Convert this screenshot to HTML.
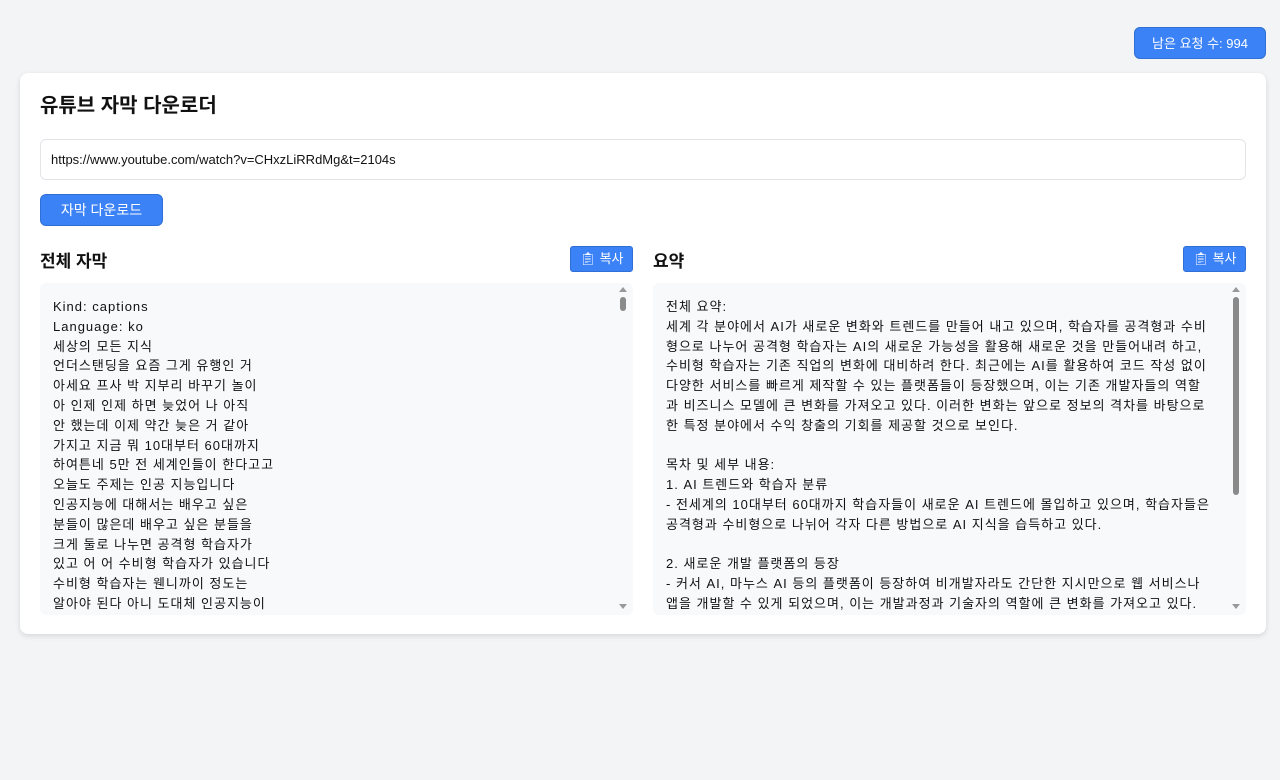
<!DOCTYPE html>
<html><head><meta charset="utf-8"><style>
body{margin:0;background:#f3f4f6;font-family:"Liberation Sans","Noto Sans CJK KR",sans-serif;color:#111;width:1280px;height:780px;overflow:hidden;position:relative}
.req{position:absolute;left:1134px;top:27px;width:132px;height:32px;background:#3b82f6;border-radius:6px;color:#fff;font-size:13px;line-height:32px;text-align:center;box-sizing:border-box;border:1px solid #2f6fd6}
.card{position:absolute;left:20px;top:73px;width:1246px;height:561px;background:#fff;border-radius:8px;box-shadow:0 2px 6px rgba(0,0,0,.12)}
h1{position:absolute;left:20px;top:23px;margin:0;font-size:20px;font-weight:bold;line-height:1}
.inp{position:absolute;left:20px;top:66px;width:1206px;height:41px;box-sizing:border-box;border:1px solid #e2e4e8;border-radius:6px;font-size:13px;line-height:39px;padding-left:10px}
.btn{position:absolute;left:20px;top:121px;width:123px;height:32px;background:#3b82f6;border:1px solid #2f6fd6;box-sizing:border-box;border-radius:6px;color:#fff;font-size:14px;line-height:30px;text-align:center}
h2{position:absolute;margin:0;font-size:17px;font-weight:bold;top:174px}
.copy{position:absolute;top:173px;width:63px;height:26px;background:#3b82f6;border:1px solid #2f6fd6;box-sizing:border-box;border-radius:3px;color:#fff;font-size:13px;line-height:24px;text-align:center}
.box{position:absolute;top:210px;width:593px;height:332px;background:#f8f9fb;border-radius:6px;overflow:hidden;box-sizing:border-box;padding:14px 20px 0 13px;font-size:13px;line-height:19.8px;white-space:nowrap;letter-spacing:1px}
.sb{position:absolute;right:4px;top:0;width:12px;height:332px}
.up,.dn{position:absolute;left:2px;width:0;height:0;border-left:4px solid transparent;border-right:4px solid transparent}
.up{top:4px;border-bottom:5px solid #999}.dn{bottom:6px;border-top:5px solid #999}
.th{position:absolute;left:3px;width:6px;border-radius:3px;background:#8a8a8a}
</style></head><body>
<div class="req">남은 요청 수: 994</div>
<div class="card">
<h1>유튜브 자막 다운로더</h1>
<div class="inp">https://www.youtube.com/watch?v=CHxzLiRRdMg&amp;t=2104s</div>
<div class="btn">자막 다운로드</div>
<h2 style="left:20px">전체 자막</h2>
<div class="copy" style="left:550px">📋︎ 복사</div>
<h2 style="left:633px">요약</h2>
<div class="copy" style="left:1163px">📋︎ 복사</div>
<div class="box" style="left:20px">Kind: captions<br>Language: ko<br>세상의 모든 지식<br>언더스탠딩을 요즘 그게 유행인 거<br>아세요 프사 박 지부리 바꾸기 놀이<br>아 인제 인제 하면 늦었어 나 아직<br>안 했는데 이제 약간 늦은 거 같아<br>가지고 지금 뭐 10대부터 60대까지<br>하여튼네 5만 전 세계인들이 한다고고<br>오늘도 주제는 인공 지능입니다<br>인공지능에 대해서는 배우고 싶은<br>분들이 많은데 배우고 싶은 분들을<br>크게 둘로 나누면 공격형 학습자가<br>있고 어 어 수비형 학습자가 있습니다<br>수비형 학습자는 웬니까이 정도는<br>알아야 된다 아니 도대체 인공지능이
<div class="sb"><div class="up"></div><div class="th" style="top:14px;height:14px"></div><div class="dn"></div></div></div>
<div class="box" style="left:633px">전체 요약:<br>세계 각 분야에서 AI가 새로운 변화와 트렌드를 만들어 내고 있으며, 학습자를 공격형과 수비<br>형으로 나누어 공격형 학습자는 AI의 새로운 가능성을 활용해 새로운 것을 만들어내려 하고,<br>수비형 학습자는 기존 직업의 변화에 대비하려 한다. 최근에는 AI를 활용하여 코드 작성 없이<br>다양한 서비스를 빠르게 제작할 수 있는 플랫폼들이 등장했으며, 이는 기존 개발자들의 역할<br>과 비즈니스 모델에 큰 변화를 가져오고 있다. 이러한 변화는 앞으로 정보의 격차를 바탕으로<br>한 특정 분야에서 수익 창출의 기회를 제공할 것으로 보인다.<br><br>목차 및 세부 내용:<br>1. AI 트렌드와 학습자 분류<br>- 전세계의 10대부터 60대까지 학습자들이 새로운 AI 트렌드에 몰입하고 있으며, 학습자들은<br>공격형과 수비형으로 나뉘어 각자 다른 방법으로 AI 지식을 습득하고 있다.<br><br>2. 새로운 개발 플랫폼의 등장<br>- 커서 AI, 마누스 AI 등의 플랫폼이 등장하여 비개발자라도 간단한 지시만으로 웹 서비스나<br>앱을 개발할 수 있게 되었으며, 이는 개발과정과 기술자의 역할에 큰 변화를 가져오고 있다.
<div class="sb"><div class="up"></div><div class="th" style="top:14px;height:198px"></div><div class="dn"></div></div></div>
</div>
</body></html>
